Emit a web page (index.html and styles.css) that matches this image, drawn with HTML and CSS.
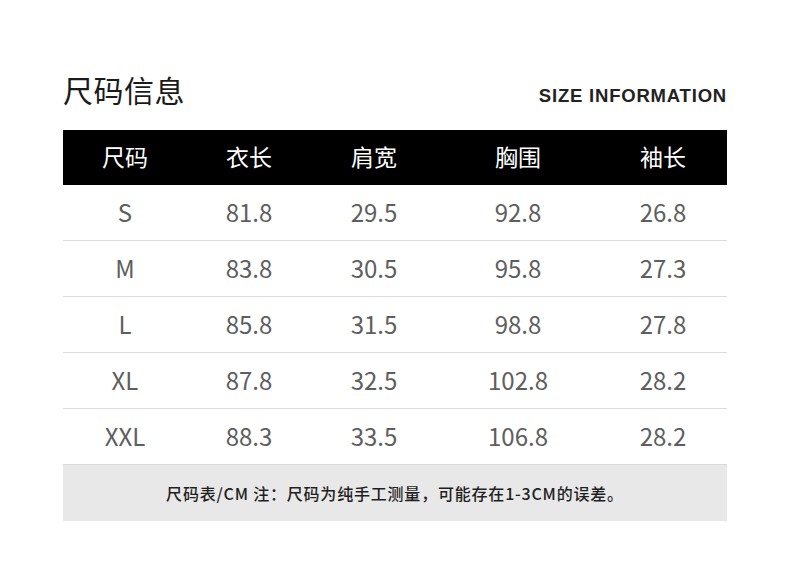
FILE: index.html
```html
<!DOCTYPE html>
<html lang="zh-CN">
<head>
<meta charset="utf-8">
<title>尺码信息</title>
<link rel="stylesheet" href="styles.css">
</head>
<body>
<div class="page">
  <div class="title-row">
    <h1 class="title">尺码信息</h1>
    <div class="subtitle">SIZE INFORMATION</div>
  </div>
  <div class="table">
    <div class="row head">
      <div>尺码</div><div>衣长</div><div>肩宽</div><div>胸围</div><div>袖长</div>
    </div>
    <div class="row">
      <div>S</div><div>81.8</div><div>29.5</div><div>92.8</div><div>26.8</div>
    </div>
    <div class="row">
      <div>M</div><div>83.8</div><div>30.5</div><div>95.8</div><div>27.3</div>
    </div>
    <div class="row">
      <div>L</div><div>85.8</div><div>31.5</div><div>98.8</div><div>27.8</div>
    </div>
    <div class="row">
      <div>XL</div><div>87.8</div><div>32.5</div><div>102.8</div><div>28.2</div>
    </div>
    <div class="row">
      <div>XXL</div><div>88.3</div><div>33.5</div><div>106.8</div><div>28.2</div>
    </div>
    <div class="note">尺码表/CM 注：尺码为纯手工测量，可能存在1-3CM的误差。</div>
  </div>
</div>
</body>
</html>
```
FILE: styles.css
```css
html, body {
  margin: 0;
  padding: 0;
  background: #ffffff;
}
body {
  font-family: "Noto Sans CJK SC", "Noto Sans", sans-serif;
}
.page {
  width: 664px;
  margin-left: 63px;
  padding-top: 69px;
}
.title-row {
  display: flex;
  justify-content: space-between;
  align-items: flex-end;
  height: 40px;
}
.title {
  margin: 0;
  font-size: 30px;
  line-height: 40px;
  font-weight: 400;
  color: #1a1a1a;
  letter-spacing: 0.5px;
}
.subtitle {
  font-family: "Liberation Sans", Arial, sans-serif;
  font-weight: 700;
  font-size: 18.5px;
  line-height: 20px;
  letter-spacing: 0.8px;
  color: #222;
  margin-bottom: 3px;
}
.table {
  margin-top: 21px;
}
.row {
  display: grid;
  grid-template-columns: 124px 124px 126px 162px 128px;
  height: 55px;
  box-sizing: content-box;
  border-bottom: 1px solid #dcdcdc;
  align-items: center;
  text-align: center;
  font-size: 24px;
  color: #5e5e5e;
}
.row > div {
  padding-bottom: 2px;
}
.row.head {
  background: #000;
  color: #fff;
  border-bottom: none;
  font-size: 23px;
}
.row.head > div {
  padding-bottom: 3px;
}
.note {
  background: #e8e8e8;
  height: 56px;
  display: flex;
  align-items: center;
  justify-content: center;
  font-size: 16px;
  font-weight: 500;
  color: #1f1f1f;
  letter-spacing: 0.8px;
}
```
